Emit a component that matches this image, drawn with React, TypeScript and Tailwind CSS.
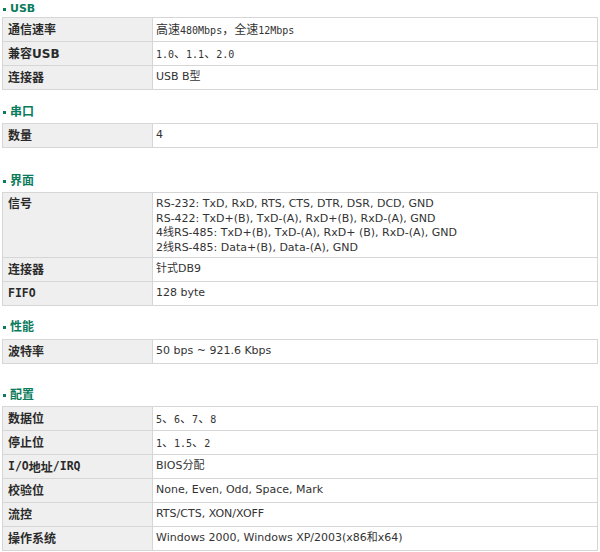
import React from 'react';

type Cell = { text: string | string[]; mono?: boolean };
type Row = { label: string; labelMono?: boolean; value: Cell };
type Section = { title: string; gap: string; tableGap: string; rows: Row[] };

const sections: Section[] = [
  {
    title: 'USB',
    gap: 'mt-[3px]',
    tableGap: 'mt-[2px]',
    rows: [
      { label: '通信速率', value: { text: '高速480Mbps，全速12Mbps', mono: true } },
      { label: '兼容USB', value: { text: '1.0、1.1、2.0', mono: true } },
      { label: '连接器', value: { text: 'USB B型' } },
    ],
  },
  {
    title: '串口',
    gap: 'mt-[16px]',
    tableGap: 'mt-[5px]',
    rows: [{ label: '数量', value: { text: '4' } }],
  },
  {
    title: '界面',
    gap: 'mt-[27px]',
    tableGap: 'mt-[5px]',
    rows: [
      {
        label: '信号',
        value: {
          text: [
            'RS-232: TxD, RxD, RTS, CTS, DTR, DSR, DCD, GND',
            'RS-422: TxD+(B), TxD-(A), RxD+(B), RxD-(A), GND',
            '4线RS-485: TxD+(B), TxD-(A), RxD+ (B), RxD-(A), GND',
            '2线RS-485: Data+(B), Data-(A), GND',
          ],
        },
      },
      { label: '连接器', value: { text: '针式DB9' } },
      { label: 'FIFO', labelMono: true, value: { text: '128 byte' } },
    ],
  },
  {
    title: '性能',
    gap: 'mt-[15px]',
    tableGap: 'mt-[6px]',
    rows: [{ label: '波特率', value: { text: '50 bps ~ 921.6 Kbps' } }],
  },
  {
    title: '配置',
    gap: 'mt-[25px]',
    tableGap: 'mt-[5px]',
    rows: [
      { label: '数据位', value: { text: '5、6、7、8', mono: true } },
      { label: '停止位', value: { text: '1、1.5、2', mono: true } },
      { label: 'I/O地址/IRQ', labelMono: true, value: { text: 'BIOS分配' } },
      { label: '校验位', value: { text: 'None, Even, Odd, Space, Mark' } },
      { label: '流控', value: { text: 'RTS/CTS, XON/XOFF' } },
      { label: '操作系统', value: { text: 'Windows 2000, Windows XP/2003(x86和x64)' } },
    ],
  },
];

const CJK = /([\u3000-\u9fff\uff00-\uffef]+)/;

// SimSun-like mix: latin runs in a narrow monospace, CJK runs at 12px
const Mixed: React.FC<{ text: string; bold?: boolean }> = ({ text, bold }) => {
  const parts = text.split(CJK).filter(Boolean);
  return (
    <>
      {parts.map((p, i) =>
        CJK.test(p) ? (
          <span key={i} className="font-['Noto_Sans_CJK_SC',sans-serif] text-[12px]">
            {p}
          </span>
        ) : (
          <span
            key={i}
            className={`font-['DejaVu_Sans_Mono',monospace] ${
              bold ? 'font-bold text-[11.5px]' : 'text-[10px]'
            }`}
          >
            {p}
          </span>
        )
      )}
    </>
  );
};

const SpecRow: React.FC<{ row: Row; first: boolean }> = ({ row, first }) => {
  const multi = Array.isArray(row.value.text);
  return (
    <div className={`flex ${first ? '' : 'border-t border-[#d6d6d6]'}`}>
      <div
        className={`w-[150px] shrink-0 bg-[#efefef] border-r border-[#d6d6d6] pl-[5px] flex font-bold text-[#2a2a2a] text-[12px] font-['DejaVu_Sans','Noto_Sans_CJK_SC',sans-serif] ${
          multi ? 'items-start pt-[4px] leading-[15px]' : 'items-center h-[23px]'
        }`}
      >
        {row.labelMono ? <Mixed text={row.label} bold /> : row.label}
      </div>
      <div
        className={`flex-1 pl-[3px] text-[#333] text-[11px] font-['DejaVu_Sans','Noto_Sans_CJK_SC',sans-serif] ${
          multi ? 'pt-[4px] pb-[2px] leading-[14.5px]' : 'flex items-center h-[23px]'
        }`}
      >
        {multi ? (
          (row.value.text as string[]).map((line) => <div key={line}>{line}</div>)
        ) : row.value.mono ? (
          <span className="whitespace-pre">
            <Mixed text={row.value.text as string} />
          </span>
        ) : (
          row.value.text
        )}
      </div>
    </div>
  );
};

export default function App() {
  return (
    <div className="w-[600px] h-[552px] bg-white overflow-hidden">
      {sections.map((section) => (
        <div key={section.title} className={section.gap}>
          {/* Section heading */}
          <div className="flex items-center h-[12px] pl-[3px] text-[#0a7b5c] font-bold text-[12px] font-['DejaVu_Sans','Noto_Sans_CJK_SC',sans-serif]">
            <span className="w-[3px] h-[3px] bg-[#0a7b5c] mr-[4px]" />
            <span className={section.title === 'USB' ? 'text-[11px]' : ''}>{section.title}</span>
          </div>
          <div className={`${section.tableGap} ml-[2px] w-[596px] border border-[#d6d6d6]`}>
            {section.rows.map((row, i) => (
              <SpecRow key={row.label} row={row} first={i === 0} />
            ))}
          </div>
        </div>
      ))}
    </div>
  );
}
